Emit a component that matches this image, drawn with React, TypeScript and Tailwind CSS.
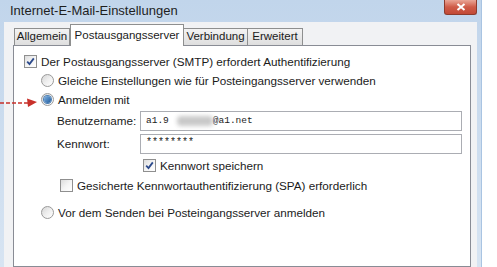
import React from 'react';

const font = "font-['Liberation_Sans',Arial,sans-serif]";

function CheckBox({ checked }: { checked: boolean }) {
  return (
    <span className="flex h-[13px] w-[13px] shrink-0 items-center justify-center border border-[#8f8f8f] bg-gradient-to-br from-[#dcdcdc] via-[#f4f4f4] to-white">
      {checked && (
        <svg width="9" height="9" viewBox="0 0 9 9">
          <path d="M1.2 4.6 L3.5 7 L7.8 1.4" fill="none" stroke="#2c4a8c" strokeWidth="1.8" />
        </svg>
      )}
    </span>
  );
}

function Radio({ checked }: { checked: boolean }) {
  return (
    <span className="flex h-[13px] w-[13px] shrink-0 items-center justify-center rounded-full border border-[#9a9a9a] bg-gradient-to-br from-[#d6d6d6] via-[#efefef] to-white">
      {checked && (
        <span className="h-[7px] w-[7px] rounded-full bg-gradient-to-br from-[#7fb2e4] to-[#1d5a9a] ring-1 ring-[#4b7fb4]" />
      )}
    </span>
  );
}

const tabs = [
  { label: 'Allgemein', w: 'w-[56px]' },
  { label: 'Postausgangsserver', w: 'w-[114px]', active: true },
  { label: 'Verbindung', w: 'w-[65px]' },
  { label: 'Erweitert', w: 'w-[56px]' },
];

export default function App() {
  return (
    <div className={`relative flex h-[267px] w-[497px] overflow-hidden bg-white text-[11.7px] text-[#1b1b1b] ${font}`}>
      <div className="flex h-full w-[482px] flex-col bg-gradient-to-b from-[#c1d5eb] to-[#d7e4f2] px-[4px] border-r border-[#a9c4e2]">
        {/* title bar */}
        <div className="flex h-[22px] shrink-0 items-start justify-between">
          <span className="pl-[6px] pt-[3px] text-[13px] leading-[16px] text-[#1e1e1e]">Internet-E-Mail-Einstellungen</span>
          <button className="flex h-[15px] w-[33px] items-center justify-center rounded-b-[3px] border border-t-0 border-[#8d3b2d] bg-gradient-to-b from-[#e9a596] via-[#cf5b48] to-[#c24a36]">
            <svg width="10" height="8" viewBox="0 0 10 8">
              <path d="M1.5 1 L8.5 7 M8.5 1 L1.5 7" stroke="white" strokeWidth="2" />
            </svg>
          </button>
        </div>

        {/* client */}
        <div className="flex flex-1 flex-col bg-[#f1f2f4] pl-[9px] pr-[6px] pt-[2px]">
          <div className="flex h-[21px] items-end pl-[1px]">
            {tabs.map((t) =>
              t.active ? (
                <div
                  key={t.label}
                  className={`${t.w} relative z-10 -mb-px flex h-[22px] items-center justify-center border border-b-0 border-[#8e8f8f] bg-white text-[11.5px]`}
                >
                  {t.label}
                </div>
              ) : (
                <div
                  key={t.label}
                  className={`${t.w} -ml-px flex h-[17px] items-center justify-center border border-b-0 border-[#8e8f8f] bg-gradient-to-b from-[#f3f3f3] to-[#dedede] text-[11.5px] first:ml-0`}
                >
                  {t.label}
                </div>
              )
            )}
          </div>

          <div className="flex flex-1 flex-col border border-[#898c95] bg-white pl-[10px] pr-[8px] pt-[8px]">
            <label className="flex h-[15px] items-center gap-[4px]">
              <CheckBox checked />
              <span>Der Postausgangsserver (SMTP) erfordert Authentifizierung</span>
            </label>

            <div className="mt-[4px] flex flex-col gap-[4px] pl-[17px]">
              <label className="flex h-[15px] items-center gap-[4px]">
                <Radio checked={false} />
                <span>Gleiche Einstellungen wie für Posteingangsserver verwenden</span>
              </label>
              <label className="flex h-[15px] items-center gap-[4px]">
                <Radio checked />
                <span>Anmelden mit</span>
              </label>
            </div>

            <div className="mt-[4px] flex items-center">
              <span className="w-[116px] shrink-0 pl-[33px]">Benutzername:</span>
              <div className="relative flex h-[20px] flex-1 items-center border border-[#abadb3] bg-white pl-[5px] font-['Liberation_Mono',monospace] text-[9.5px]">
                <span>a1.9</span>
                <span className="ml-[8px] h-[10px] w-[36px] rounded-sm bg-[#c9c9c9] blur-[2px]" />
                <span>@a1.net</span>
              </div>
            </div>

            <div className="mt-[3px] flex items-center">
              <span className="w-[116px] shrink-0 pl-[33px]">Kennwort:</span>
              <div className="flex h-[20px] flex-1 items-start border border-[#abadb3] bg-white pl-[5px] pt-[2px] font-['Liberation_Mono',monospace] text-[10px] leading-[11px]">
                ********
              </div>
            </div>

            <label className="mt-[4px] flex h-[15px] items-center gap-[4px] pl-[119px]">
              <CheckBox checked />
              <span>Kennwort speichern</span>
            </label>

            <label className="mt-[5px] flex h-[15px] items-center gap-[4px] pl-[36px]">
              <CheckBox checked={false} />
              <span>Gesicherte Kennwortauthentifizierung (SPA) erforderlich</span>
            </label>

            <label className="mt-[12px] flex h-[15px] items-center gap-[4px] pl-[17px]">
              <Radio checked={false} />
              <span>Vor dem Senden bei Posteingangsserver anmelden</span>
            </label>
          </div>
        </div>
      </div>

      {/* annotation arrow */}
      <svg className="absolute left-0 top-[95px]" width="40" height="14" viewBox="0 0 40 14">
        <path d="M0 8 L29 8" stroke="#c8302a" strokeWidth="1.5" strokeDasharray="4 2" />
        <path d="M27 3.5 L37 7 L28 12 Z" fill="#c8302a" />
      </svg>
    </div>
  );
}
